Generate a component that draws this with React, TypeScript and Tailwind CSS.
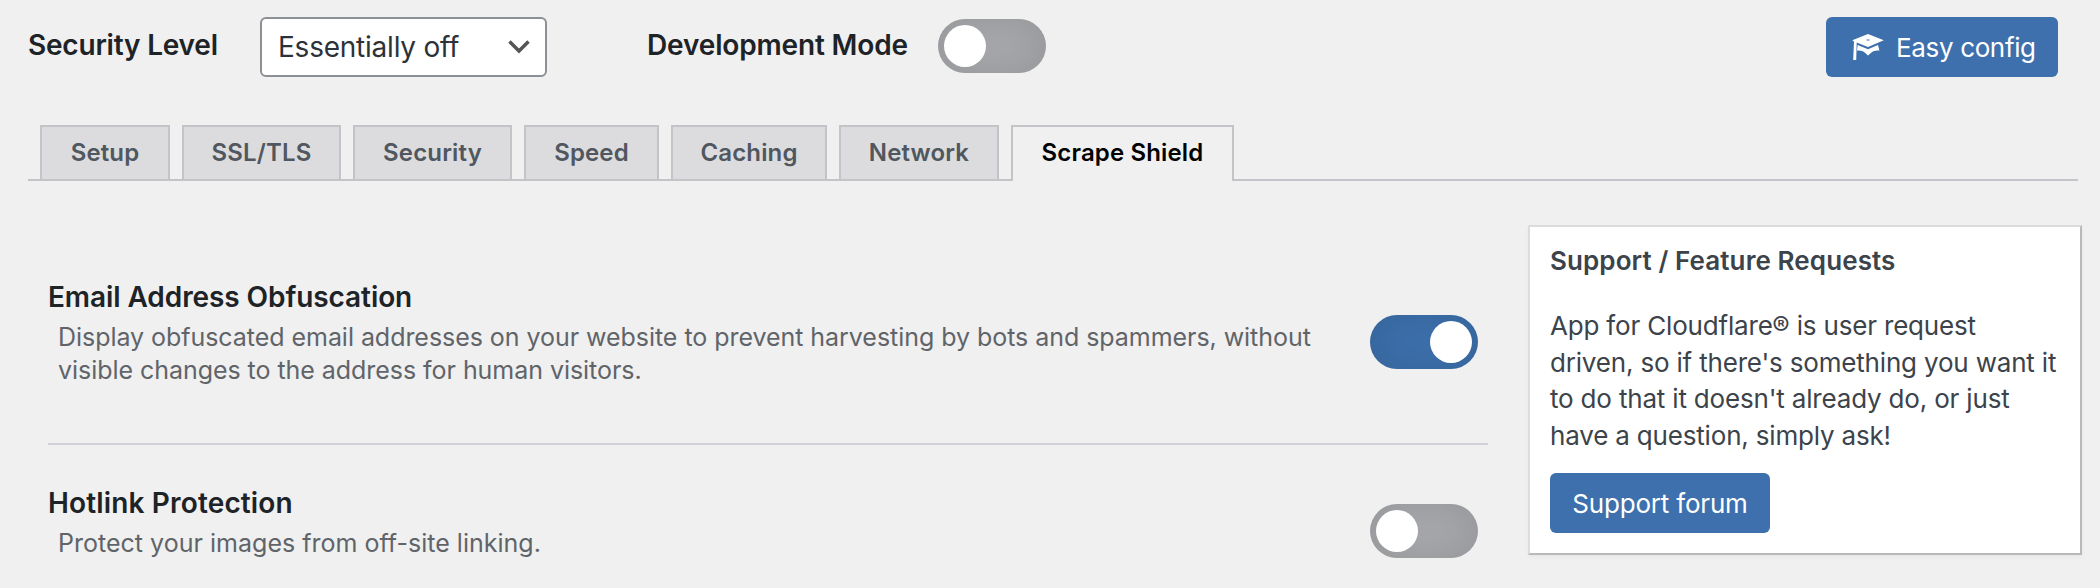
const tabs = [
  { label: "Setup", width: "w-[130px]" },
  { label: "SSL/TLS", width: "w-[159px]" },
  { label: "Security", width: "w-[159px]" },
  { label: "Speed", width: "w-[135px]" },
  { label: "Caching", width: "w-[156px]" },
  { label: "Network", width: "w-[160px]" },
  { label: "Scrape Shield", width: "w-[223px]", active: true },
];

function Toggle({ on = false }: { on?: boolean }) {
  return (
    <button
      type="button"
      role="switch"
      aria-checked={on}
      className={`flex h-[54px] w-[108px] shrink-0 items-center rounded-full px-1.5 shadow-[inset_0_0_40px_rgba(0,0,0,0.12)] ${
        on ? "justify-end bg-[#3d70ac]" : "justify-start bg-[#a7a9ac]"
      }`}
    >
      <span className="size-[42px] rounded-full bg-white" />
    </button>
  );
}

function GraduationCap() {
  return (
    <svg width="32" height="28" viewBox="0 0 32 28" fill="currentColor" aria-hidden="true">
      <path
        fillRule="evenodd"
        d="M16 1 31.8 7.3 16 14 4.7 9.6 4.2 27H1.2L2 8.4.3 7.3ZM14.6 6.4v1.2h3V6.4Z"
      />
      <path d="M5.6 12 16 16.2 26 12l1.4 5.6c-3.2-.5-6.2.3-8.2 2.2L16 22.6l-3-2.8c-2.1-1.9-4.9-2.7-8-2.2Z" />
    </svg>
  );
}

export default function App() {
  return (
    <div className="h-[588px] w-[2100px] overflow-hidden bg-[#f0f0f0] font-['Inter',sans-serif] text-[#1d2327]">
      <header className="flex h-[125px] items-start pl-7 pr-[42px] pt-[17px]">
        <span className="mt-3 w-[232px] whitespace-nowrap text-[28px] font-semibold leading-8 tracking-[-0.2px]">
          Security Level
        </span>
        <button
          type="button"
          className="flex h-[60px] w-[287px] items-center justify-between rounded-md border-2 border-[#8c8f94] bg-white pl-4 pr-3.5 text-[28px] tracking-[-0.23px] text-[#2c3338]"
        >
          Essentially off
          <svg width="24" height="16" viewBox="0 0 24 16" fill="none" stroke="#555" strokeWidth="3.5" aria-hidden="true">
            <path d="m2.5 2.5 9.5 9.5 9.5-9.5" />
          </svg>
        </button>
        <span className="ml-[100px] mt-3 w-[291px] whitespace-nowrap text-[28px] font-semibold leading-8 tracking-[-0.15px]">
          Development Mode
        </span>
        <div className="mt-0.5">
          <Toggle />
        </div>
        <button
          type="button"
          className="ml-auto flex h-[60px] w-[232px] items-center gap-3 rounded-md bg-[#3d70ac] pl-[26px] text-[26px] tracking-[-0.35px] text-white"
        >
          <GraduationCap />
          <span className="whitespace-nowrap">Easy config</span>
        </button>
      </header>

      <nav className="ml-7 flex h-14 w-[2050px] gap-3 border-b-2 border-[#c3c4c7] pl-3">
        {tabs.map((tab) => (
          <button
            key={tab.label}
            type="button"
            className={`flex justify-center whitespace-nowrap border-2 border-b-0 border-[#c3c4c7] pt-[9px] text-2xl font-semibold leading-[34px] tracking-[0.15px] ${tab.width} ${
              tab.active ? "-mb-0.5 bg-[#f0f0f0] text-black" : "bg-[#dcdcde] text-[#50575e]"
            }`}
          >
            {tab.label}
          </button>
        ))}
      </nav>

      <main className="flex items-start">
        <div className="ml-12 w-[1440px]">
          <section className="flex h-[264px] border-b-2 border-[#d1d2d7] pr-2.5 pt-[100px]">
            <div className="grow">
              <h2 className="text-[28px] font-semibold leading-8 tracking-[-0.08px]">Email Address Obfuscation</h2>
              <p className="ml-2.5 mt-2 whitespace-nowrap text-[25px] leading-[33px] tracking-[-0.045px] text-[#606469]">
                Display obfuscated email addresses on your website to prevent harvesting by bots and spammers, without
                <br />
                visible changes to the address for human visitors.
              </p>
            </div>
            <div className="mt-[34px]">
              <Toggle on />
            </div>
          </section>
          <section className="flex pr-2.5 pt-[42px]">
            <div className="grow">
              <h2 className="text-[28px] font-semibold leading-8 tracking-[0.15px]">Hotlink Protection</h2>
              <p className="ml-2.5 mt-2 whitespace-nowrap text-[25px] leading-[33px] tracking-[0.02px] text-[#606469]">
                Protect your images from off-site linking.
              </p>
            </div>
            <div className="mt-[17px]">
              <Toggle />
            </div>
          </section>
        </div>

        <aside className="ml-10 mt-11 h-[330px] w-[554px] border-2 border-b-[#b8b9bb] border-l-[#dcdcde] border-r-[#b8b9bb] border-t-[#dcdcde] bg-white pl-5 pt-4 text-[#3c434a] shadow-[0_2px_4px_rgba(0,0,0,0.04)]">
          <h3 className="text-[26px] font-semibold leading-9 tracking-[0.1px]">Support / Feature Requests</h3>
          <p className="mt-[29px] whitespace-nowrap text-[26px] leading-[36.5px] tracking-[-0.18px]">
            App for Cloudflare® is user request
            <br />
            driven, so if there's something you want it
            <br />
            to do that it doesn't already do, or just
            <br />
            have a question, simply ask!
          </p>
          <button
            type="button"
            className="mt-[19px] h-[60px] w-[220px] whitespace-nowrap rounded-md bg-[#3d70ac] text-[26px] tracking-[-0.2px] text-white"
          >
            Support forum
          </button>
        </aside>
      </main>
    </div>
  );
}
